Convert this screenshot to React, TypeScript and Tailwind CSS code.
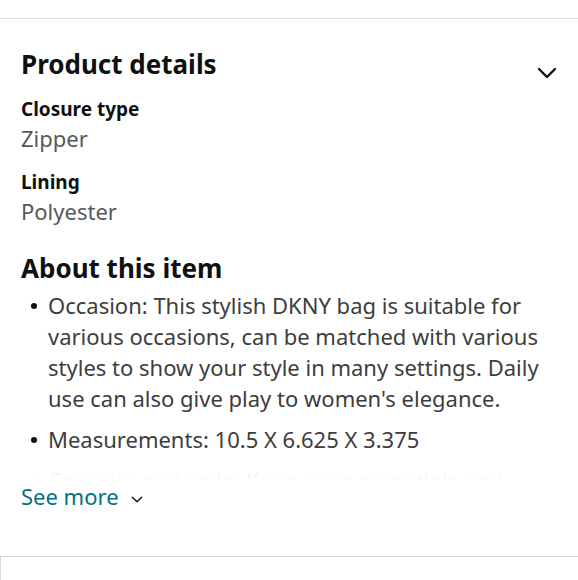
const bullets = [
  "Occasion: This stylish DKNY bag is suitable for various occasions, can be matched with various styles to show your style in many settings. Daily use can also give play to women's elegance.",
  "Measurements: 10.5 X 6.625 X 3.375",
  "Capacity and style: Keep your essentials and phone safe with a roomy interior and zip pockets.",
];

const details = [
  { label: "Closure type", value: "Zipper" },
  { label: "Lining", value: "Polyester" },
];

function Chevron({ className }: { className?: string }) {
  return (
    <svg viewBox="0 0 20 12" fill="none" stroke="currentColor" strokeWidth={2.4} strokeLinecap="round" strokeLinejoin="round" className={className}>
      <path d="M2 2l8 8 8-8" />
    </svg>
  );
}

export default function App() {
  return (
    <div className="h-[580px] w-[578px] overflow-hidden bg-white font-['Noto_Sans',sans-serif] text-[#0f1111]">
      <div className="h-[18px]" />
      <section className="border-t border-[#dddddd] px-[21px] pt-[27px]">
        <div className="flex items-center justify-between">
          <h2 className="text-[26px] font-bold leading-[36px]">Product details</h2>
          <Chevron className="mt-[18px] h-[12px] w-[20px]" />
        </div>

        <div className="mt-[14px] flex flex-col gap-[15px]">
          {details.map((d) => (
            <div key={d.label}>
              <div className="text-[19px] font-bold leading-[26px]">{d.label}</div>
              <div className="text-[22px] leading-[32px] text-[#565959]">{d.value}</div>
            </div>
          ))}
        </div>

        <h2 className="mt-[23px] text-[26px] font-bold leading-[36px]">About this item</h2>

        <div className="relative h-[195px] overflow-hidden">
          <ul className="flex flex-col gap-[10px] pt-[4px]">
            {bullets.map((b) => (
              <li key={b} className="flex text-[22px] leading-[31px] text-[#3d3d3d]">
                <span className="flex h-[31px] w-[27px] shrink-0 items-center pl-[10px]">
                  <span className="h-[6px] w-[6px] rounded-full bg-[#0f1111]" />
                </span>
                <span>{b}</span>
              </li>
            ))}
          </ul>
          <div className="absolute inset-x-0 bottom-0 h-[24px] bg-gradient-to-b from-white/80 to-white" />
        </div>

        <button type="button" className="flex items-center gap-[12px] text-[22px] leading-[30px] text-[#007185]">
          See more
          <Chevron className="mt-[6px] h-[7px] w-[12px] text-[#0f1111]" />
        </button>
      </section>

      <div className="mt-[45px] h-[40px] border-l border-t border-[#d5d9d9]" />
    </div>
  );
}
